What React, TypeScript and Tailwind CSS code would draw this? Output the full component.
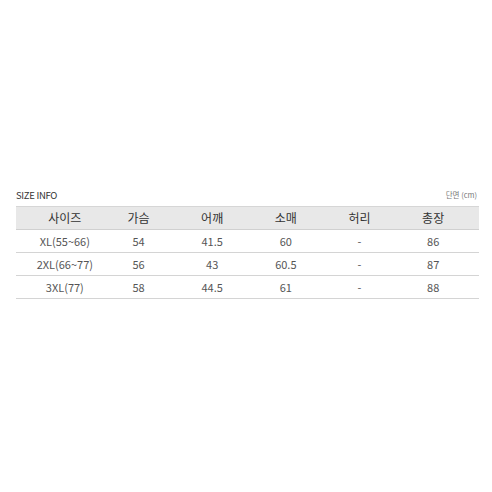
import React from 'react';

const headers = ['사이즈', '가슴', '어깨', '소매', '허리', '총장'];

const rows = [
  ['XL(55~66)', '54', '41.5', '60', '-', '86'],
  ['2XL(66~77)', '56', '43', '60.5', '-', '87'],
  ['3XL(77)', '58', '44.5', '61', '-', '88'],
];

const App = () => {
  return (
    <div
      className="w-full h-[492px] bg-white pl-[16px] pr-[13px] pt-[188px]"
      style={{ fontFamily: '"Noto Sans CJK KR", "Noto Sans", sans-serif' }}
    >
      <div className="flex items-end justify-between h-[18px]">
        <span className="text-[9.5px] leading-[12px] text-[#333] tracking-[-0.3px] mb-[5px]">SIZE INFO</span>
        <span className="text-[7.5px] leading-[10px] text-[#777] mr-[2px] mb-[6px]">단면 (cm)</span>
      </div>

      {/* size table */}
      <div className="border-t border-[#d6d6d6]">
        <div className="grid grid-cols-6 pl-[12px] pr-[9px] h-[23px] items-center bg-[#e8e8e8] border-b border-[#d0d0d0]">
          {headers.map((h) => (
            <div key={h} className="text-center text-[12px] text-[#333]">
              {h}
            </div>
          ))}
        </div>
        {rows.map((row, i) => (
          <div
            key={i}
            className="grid grid-cols-6 pl-[12px] pr-[9px] h-[23px] items-center border-b border-[#d4d4d4]"
          >
            {row.map((cell, j) => (
              <div key={j} className="text-center text-[11px] text-[#555]">
                {cell}
              </div>
            ))}
          </div>
        ))}
      </div>
    </div>
  );
};

export default App;
